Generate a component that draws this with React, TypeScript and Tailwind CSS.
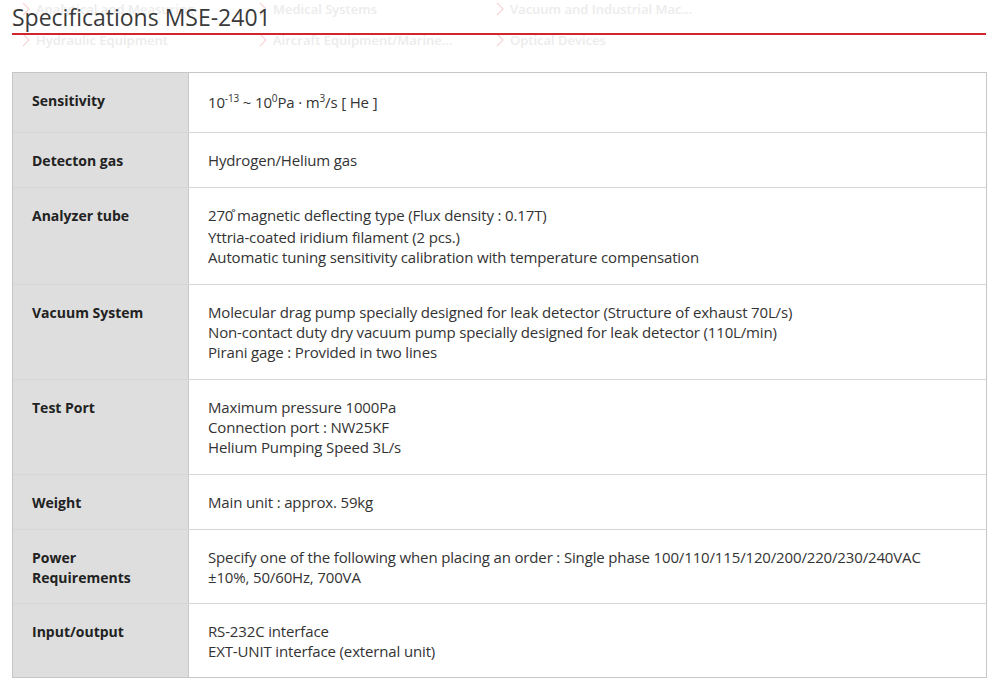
import React from 'react';

type Spec = {
  label: React.ReactNode;
  lines: React.ReactNode[];
  tall?: boolean;
};

const Sup = ({ children }: { children: React.ReactNode }) => (
  <sup className="text-[10px] leading-none align-[6px] top-0">{children}</sup>
);

const specs: Spec[] = [
  {
    label: 'Sensitivity',
    tall: true,
    lines: [
      <>
        10<Sup>-13</Sup> ~ 10<Sup>0</Sup>Pa · m<Sup>3</Sup>/s [ He ]
      </>,
    ],
  },
  { label: 'Detecton gas', lines: ['Hydrogen/Helium gas'] },
  {
    label: 'Analyzer tube',
    lines: [
      <span className="block mb-[2px]">270̊ magnetic deflecting type (Flux density : 0.17T)</span>,
      'Yttria-coated iridium filament (2 pcs.)',
      'Automatic tuning sensitivity calibration with temperature compensation',
    ],
  },
  {
    label: 'Vacuum System',
    lines: [
      'Molecular drag pump specially designed for leak detector (Structure of exhaust 70L/s)',
      'Non-contact duty dry vacuum pump specially designed for leak detector (110L/min)',
      'Pirani gage : Provided in two lines',
    ],
  },
  {
    label: 'Test Port',
    lines: ['Maximum pressure 1000Pa', 'Connection port : NW25KF', 'Helium Pumping Speed 3L/s'],
  },
  { label: 'Weight', lines: ['Main unit : approx. 59kg'] },
  {
    label: (
      <>
        Power
        <br />
        Requirements
      </>
    ),
    lines: [
      'Specify one of the following when placing an order : Single phase 100/110/115/120/200/220/230/240VAC',
      '±10%, 50/60Hz, 700VA',
    ],
  },
  {
    label: 'Input/output',
    lines: ['RS-232C interface', 'EXT-UNIT interface (external unit)'],
  },
];

const menuRows = [
  ['Analytical and Measuring', 'Medical Systems', 'Vacuum and Industrial Mac...'],
  ['Hydraulic Equipment', 'Aircraft Equipment/Marine...', 'Optical Devices'],
];

const Chevron = () => (
  <svg width="8" height="14" viewBox="0 0 8 14" className="shrink-0">
    <path d="M1 1l6 6-6 6" fill="none" stroke="#f6d6d6" strokeWidth="1.2" />
  </svg>
);

export default function App() {
  return (
    <div
      className="relative w-[998px] h-[688px] overflow-hidden bg-white text-[#333]"
      style={{ fontFamily: '"Open Sans", "Noto Sans", sans-serif' }}
    >
      {/* faded dropdown menu behind the title */}
      <div className="absolute left-[22px] top-0 flex flex-col gap-[13px] pointer-events-none">
        {menuRows.map((row, i) => (
          <div key={i} className="flex">
            {row.map(item => (
              <div key={item} className="w-[237px] flex items-center gap-[6px]">
                <Chevron />
                <span className="text-[13px] leading-[18px] font-semibold text-[#ececec] whitespace-nowrap">
                  {item}
                </span>
              </div>
            ))}
          </div>
        ))}
      </div>

      <div className="relative px-[12px]">
        <h2 className="pt-[1px] h-[33px] text-[23px] leading-[32px] text-[#3a3a3a]">
          Specifications MSE-2401
        </h2>
        <div className="h-[2px] bg-[#d0262d]" />

        <div className="mt-[37px] w-[975px] border border-[#c6c6c6]">
          {specs.map((spec, i) => {
            const two = spec.lines.length === 2;
            return (
              <div
                key={i}
                className={`flex ${i > 0 ? 'border-t border-[#d6d6d6]' : ''}`}
              >
                <div
                  className={`w-[176px] shrink-0 bg-[#dedede] border-r border-[#c8c8c8] pl-[19px] pt-[18px] text-[14px] leading-[20px] font-bold text-[#222] ${
                    two ? 'pb-[15px]' : 'pb-[16px]'
                  }`}
                >
                  {spec.label}
                </div>
                <div
                  className={`flex-1 pl-[19px] text-[15px] leading-[20px] tracking-[-0.15px] ${
                    spec.tall ? 'pt-[19px] pb-[20px]' : two ? 'pt-[17px] pb-[16px]' : 'pt-[17px] pb-[17px]'
                  }`}
                >
                  {spec.lines.map((line, j) => (
                    <div key={j}>{line}</div>
                  ))}
                </div>
              </div>
            );
          })}
        </div>
      </div>
    </div>
  );
}
